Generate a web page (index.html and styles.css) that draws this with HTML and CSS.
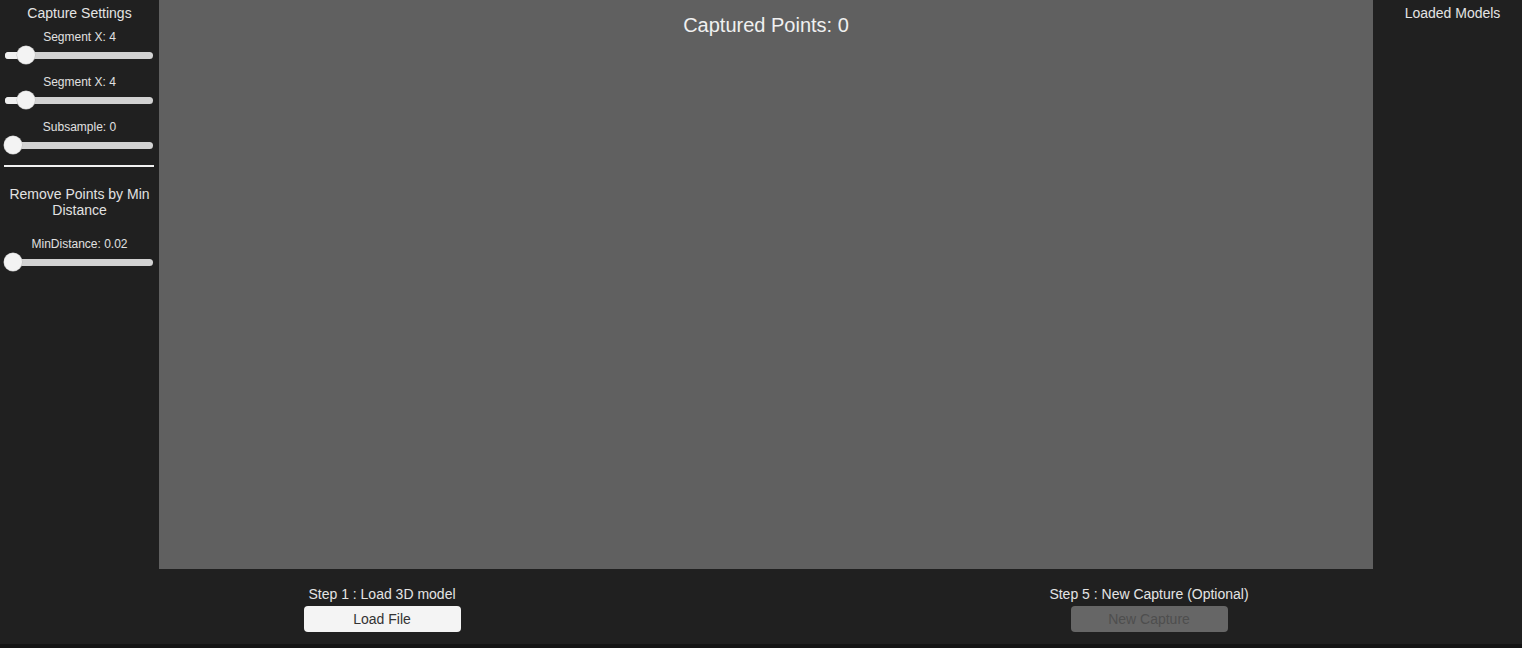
FILE: index.html
```html
<!DOCTYPE html>
<html>
<head>
<meta charset="utf-8">
<link rel="stylesheet" href="styles.css">
</head>
<body>
<div class="app">
  <aside class="left">
    <div class="title">Capture Settings</div>
    <div class="field">
      <div class="label">Segment X: 4</div>
      <div class="slider"><div class="fill" style="width:21px"></div><div class="thumb" style="left:12px"></div></div>
    </div>
    <div class="field">
      <div class="label">Segment X: 4</div>
      <div class="slider"><div class="fill" style="width:21px"></div><div class="thumb" style="left:12px"></div></div>
    </div>
    <div class="field field-last">
      <div class="label">Subsample: 0</div>
      <div class="slider"><div class="fill" style="width:8px"></div><div class="thumb" style="left:-1px"></div></div>
    </div>
    <div class="divider"></div>
    <div class="section">Remove Points by Min Distance</div>
    <div class="field field-b">
      <div class="label">MinDistance: 0.02</div>
      <div class="slider"><div class="fill" style="width:8px"></div><div class="thumb" style="left:-1px"></div></div>
    </div>
  </aside>
  <main class="view">
    <div class="count">Captured Points: 0</div>
  </main>
  <aside class="right">
    <div class="title">Loaded Models</div>
  </aside>
  <footer class="bottom">
    <div class="step step1">
      <div class="step-label">Step 1 : Load 3D model</div>
      <button class="btn">Load File</button>
    </div>
    <div class="step step5">
      <div class="step-label">Step 5 : New Capture (Optional)</div>
      <button class="btn btn-disabled">New Capture</button>
    </div>
  </footer>
  <div class="strip"></div>
</div>
</body>
</html>
```
FILE: styles.css
```css
* { box-sizing: border-box; }
html, body { margin: 0; padding: 0; }
body {
  background: #202020;
  font-family: "Liberation Sans", Arial, sans-serif;
  color: #e2e2e2;
  width: 1522px;
  height: 648px;
  overflow: hidden;
}
.app {
  display: grid;
  grid-template-columns: 159px 1214px 149px;
  grid-template-rows: 569px 75px 4px;
  height: 648px;
}
.left {
  grid-column: 1; grid-row: 1;
  display: flex;
  flex-direction: column;
  padding-top: 4px;
}
.title {
  font-size: 14px;
  line-height: 18px;
  text-align: center;
  color: #e4e4e4;
}
.left .title { margin-bottom: 8px; }
.field { display: flex; flex-direction: column; margin-bottom: 10px; }
.field-last { margin-bottom: 0; }
.label {
  font-size: 12px;
  line-height: 14px;
  text-align: center;
  color: #e0e0e0;
}
.slider {
  position: relative;
  margin: 1px 0 0 5px;
  width: 148px;
  height: 20px;
}
.slider::before {
  content: "";
  position: absolute;
  left: 0; right: 0; top: 6.5px;
  height: 7px;
  border-radius: 4px;
  background: #d2d2d2;
}
.fill {
  position: absolute;
  left: 0; top: 6.5px;
  height: 7px;
  border-radius: 4px 0 0 4px;
  background: #f0f0f0;
}
.thumb {
  position: absolute;
  top: 1px;
  width: 18px; height: 18px;
  border-radius: 50%;
  background: #f3f3f3;
  box-shadow: 0 0 0 0.5px #bdbdbd;
}
.divider {
  margin: 10px 0 0 4px;
  width: 150px;
  height: 2px;
  background: #f2f2f2;
}
.section {
  margin-top: 19px;
  font-size: 14px;
  line-height: 16px;
  text-align: center;
  padding: 0 4px;
  color: #e2e2e2;
}
.field-b { margin-top: 19px; }
.view {
  grid-column: 2; grid-row: 1;
  background: #606060;
  display: flex;
  justify-content: center;
}
.count {
  margin-top: 13px;
  font-size: 20px;
  line-height: 24px;
  color: #f0f0f0;
}
.right {
  grid-column: 3; grid-row: 1;
  padding: 4px 0 0 10px;
}
.bottom {
  grid-column: 1 / 4; grid-row: 2;
  display: grid;
  grid-template-columns: 282px 200px 567px 200px 1fr;
  padding-top: 17px;
}
.step {
  display: flex;
  flex-direction: column;
  align-items: center;
}
.step1 { grid-column: 2; }
.step5 { grid-column: 4; }
.step-label {
  font-size: 14px;
  line-height: 16px;
  color: #e4e4e4;
  white-space: nowrap;
}
.btn {
  margin-top: 4px;
  width: 157px;
  height: 26px;
  border: none;
  border-radius: 4px;
  background: #f4f4f4;
  color: #333333;
  font-family: "Liberation Sans", Arial, sans-serif;
  font-size: 14px;
  padding: 0;
}
.btn-disabled {
  background: #666666;
  color: #4e4e4e;
}
.strip {
  grid-column: 1 / 4; grid-row: 3;
  background: #141414;
}
```
